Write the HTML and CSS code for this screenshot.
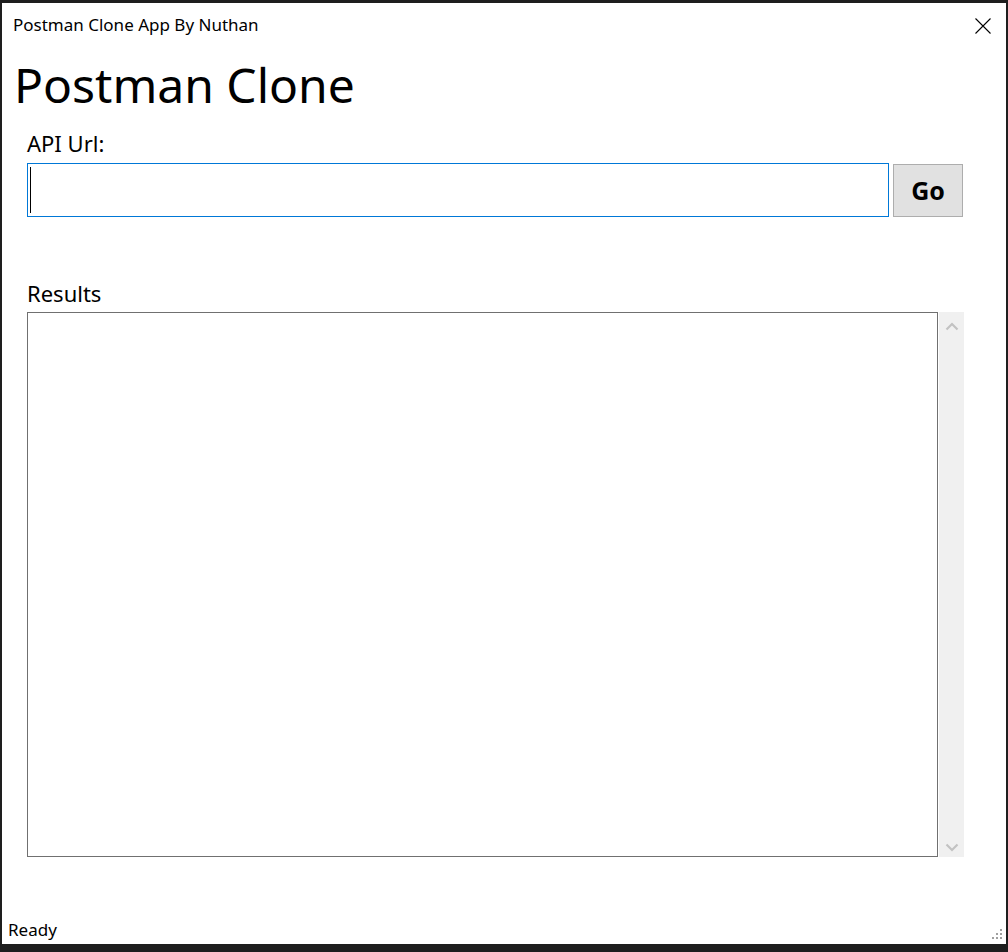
FILE: index.html
```html
<!DOCTYPE html>
<html>
<head>
<meta charset="utf-8">
<link rel="stylesheet" href="styles.css">
</head>
<body>
<div class="window">
  <div class="titlebar">
    <span class="title">Postman Clone App By Nuthan</span>
    <svg class="close" width="16" height="16" viewBox="0 0 16 16"><path d="M0.5 0.5 L15.5 15.5 M15.5 0.5 L0.5 15.5" stroke="#000" stroke-width="1.1" fill="none"/></svg>
  </div>
  <h1 class="heading">Postman Clone</h1>
  <div class="main">
    <div class="label">API Url:</div>
    <div class="urlrow">
      <div class="urlbox"><span class="caret"></span></div>
      <div class="gobtn">Go</div>
    </div>
    <div class="label results-label">Results</div>
    <div class="resultsrow">
      <div class="results"></div>
      <div class="scrollbar">
        <svg width="16" height="10" viewBox="0 0 16 10"><path d="M2.5 8.5 L8 3 L13.5 8.5" stroke="#c2c2c2" stroke-width="2.2" fill="none"/></svg>
        <svg width="16" height="10" viewBox="0 0 16 10"><path d="M2.5 1.5 L8 7 L13.5 1.5" stroke="#c2c2c2" stroke-width="2.2" fill="none"/></svg>
      </div>
    </div>
  </div>
  <div class="status">
    <span class="ready">Ready</span>
    <svg class="grip" width="11" height="11" viewBox="0 0 11 11"><g fill="#a0a0a0"><rect x="8" y="0" width="2" height="2"/><rect x="8" y="4" width="2" height="2"/><rect x="4" y="4" width="2" height="2"/><rect x="8" y="8" width="2" height="2"/><rect x="4" y="8" width="2" height="2"/><rect x="0" y="8" width="2" height="2"/></g></svg>
  </div>
</div>
</body>
</html>
```

FILE: styles.css
```css
html, body {
  margin: 0;
  padding: 0;
}
body {
  background: #1e1e1e;
  padding: 3px 2px 0 2px;
  width: 1008px;
  height: 952px;
  box-sizing: border-box;
  overflow: hidden;
  font-family: "Noto Sans", "Open Sans", sans-serif;
  color: #000;
}
.window {
  width: 1004px;
  height: 941px;
  background: #fff;
  display: flex;
  flex-direction: column;
}
.titlebar {
  height: 54px;
  flex: none;
  display: flex;
  align-items: flex-start;
  justify-content: space-between;
  padding: 10px 15px 0 11px;
  box-sizing: border-box;
}
.title {
  font-size: 17px;
  line-height: 24px;
}
.close {
  margin-top: 5px;
}
.heading {
  margin: 0 0 0 12px;
  font-weight: 400;
  font-size: 48px;
  line-height: 56px;
}
.main {
  padding: 0 0 0 25px;
  display: flex;
  flex-direction: column;
}
.label {
  font-size: 22px;
  line-height: 28px;
  margin-top: 16px;
}
.urlrow {
  display: flex;
  align-items: flex-start;
  gap: 4px;
  margin-top: 6px;
}
.urlbox {
  width: 862px;
  height: 54px;
  border: 1px solid #0078d7;
  box-sizing: border-box;
  padding: 3px 0 0 2px;
}
.caret {
  display: block;
  width: 1px;
  height: 46px;
  background: #000;
}
.gobtn {
  width: 70px;
  height: 53px;
  margin-top: 1px;
  background: #e1e1e1;
  border: 1px solid #adadad;
  box-sizing: border-box;
  display: flex;
  align-items: center;
  justify-content: center;
  font-weight: 700;
  font-size: 25px;
  padding-bottom: 2px;
}
.results-label {
  margin-top: 62px;
}
.resultsrow {
  display: flex;
  margin-top: 5px;
  height: 545px;
}
.results {
  width: 911px;
  height: 545px;
  border: 1px solid #707070;
  box-sizing: border-box;
}
.scrollbar {
  width: 25px;
  margin-left: 1px;
  height: 545px;
  background: #f0f0f0;
  display: flex;
  flex-direction: column;
  justify-content: space-between;
  align-items: center;
  padding: 9px 0 4px 1px;
  box-sizing: border-box;
}
.status {
  margin-top: auto;
  height: 26px;
  display: flex;
  justify-content: space-between;
  align-items: flex-start;
  padding: 0 3px 0 6px;
}
.ready {
  font-size: 17px;
  line-height: 24px;
}
.grip {
  margin-top: 11px;
}
```
